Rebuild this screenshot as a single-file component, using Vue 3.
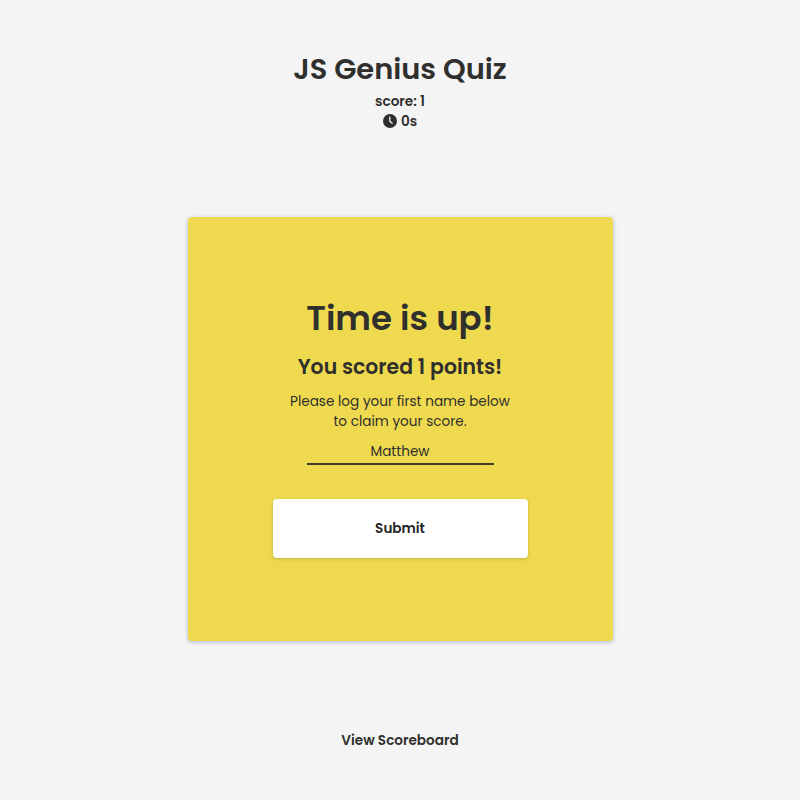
<script setup>
import { ref } from 'vue'

const score = ref(1)
const seconds = ref(0)
const name = ref('Matthew')
</script>

<template>
  <div class="page">
    <header class="header">
      <h1 class="title">JS Genius Quiz</h1>
      <p class="stat">score: {{ score }}</p>
      <p class="stat time">
        <svg class="clock" viewBox="0 0 14 14" aria-hidden="true">
          <circle cx="7" cy="7" r="7" fill="#2f2f2d" />
          <path d="M6.8 3.2V7.2L9.2 9.2" fill="none" stroke="#f4f4f4" stroke-width="1.3" stroke-linecap="round" stroke-linejoin="round" />
        </svg>
        <span class="seconds">{{ seconds }}s</span>
      </p>
    </header>

    <main class="card">
      <h2 class="headline">Time is up!</h2>
      <h3 class="result">You scored {{ score }} points!</h3>
      <p class="hint">Please log your first name below</p>
      <p class="hint second">to claim your score.</p>
      <input v-model="name" class="name" type="text" aria-label="First name" />
      <button class="submit" type="button">Submit</button>
    </main>

    <footer class="footer"><a class="link">View Scoreboard</a></footer>
  </div>
</template>

<style>
body {
  background: #f4f4f4;
}
</style>

<style scoped>
.page {
  box-sizing: border-box;
  height: 800px;
  display: flex;
  flex-direction: column;
  align-items: center;
  font-family: Poppins, Inter, sans-serif;
  color: #2f2f2d;
  background: #f4f4f4;
}
h1, h2, h3, p {
  margin: 0;
  white-space: nowrap;
}
.header {
  height: 217px;
  box-sizing: border-box;
  padding-top: 47px;
  display: flex;
  flex-direction: column;
  align-items: center;
}
.title {
  margin-bottom: 1px;
  font-size: 28.9px;
  line-height: 44px;
  font-weight: 600;
}
.stat {
  font-size: 13.6px;
  line-height: 20px;
  font-weight: 600;
}
.time {
  display: flex;
  align-items: center;
  gap: 4px;
}
.clock {
  width: 14px;
  height: 14px;
  margin-bottom: 2px;
}
.card {
  box-sizing: border-box;
  width: 425px;
  height: 424px;
  padding-top: 75px;
  display: flex;
  flex-direction: column;
  align-items: center;
  background: #efda4f;
  border-radius: 4px;
  box-shadow: 0 1px 4px rgba(80, 90, 120, 0.4);
}
.headline {
  font-size: 34px;
  line-height: 52px;
  font-weight: 600;
}
.result {
  margin-top: 7px;
  font-size: 20.4px;
  line-height: 32px;
  font-weight: 600;
}
.hint {
  margin-top: 9px;
  font-size: 13.6px;
  line-height: 20px;
}
.hint.second {
  margin-top: 0;
}
.name {
  box-sizing: border-box;
  width: 187px;
  height: 26px;
  margin-top: 7px;
  padding: 2px 0 0;
  border: 0;
  border-bottom: 2px solid #3b3a2b;
  border-radius: 0;
  outline: 0;
  background: transparent;
  font: inherit;
  font-size: 13.6px;
  color: inherit;
  text-align: center;
}
.submit {
  width: 255px;
  height: 59px;
  margin-top: 34px;
  padding: 0;
  border: 0;
  border-radius: 4px;
  background: #fff;
  box-shadow: 0 1px 3px rgba(80, 80, 40, 0.3);
  font: inherit;
  font-size: 13.6px;
  font-weight: 600;
  color: #252525;
}
.footer {
  margin-top: 90px;
  font-size: 13.6px;
  line-height: 20px;
  font-weight: 600;
}
</style>
